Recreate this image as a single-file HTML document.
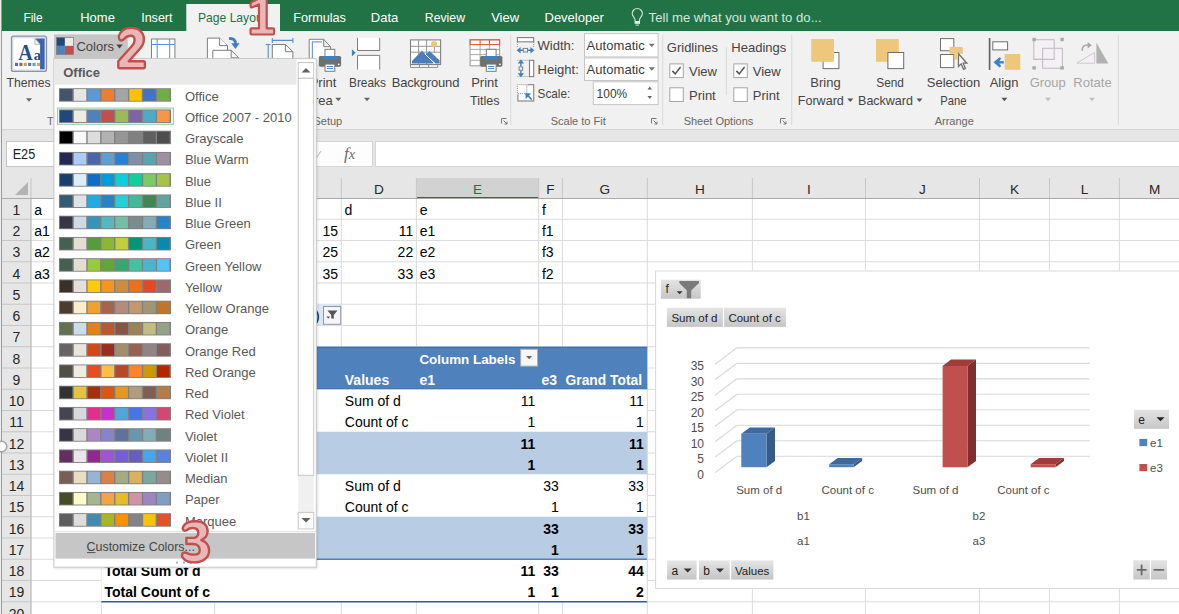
<!DOCTYPE html><html><head><meta charset="utf-8"><style>html,body{margin:0;padding:0;background:#fff;overflow:hidden;width:1179px;height:614px}svg{display:block;font-family:"Liberation Sans",sans-serif}</style></head><body>
<svg width="1179" height="614" viewBox="0 0 1179 614">
<rect x="0" y="0" width="1179" height="614" fill="#ffffff" />
<line x1="31" y1="219.25" x2="1179" y2="219.25" stroke="#dadcdd" stroke-width="1" />
<line x1="31" y1="240.5" x2="1179" y2="240.5" stroke="#dadcdd" stroke-width="1" />
<line x1="31" y1="261.75" x2="1179" y2="261.75" stroke="#dadcdd" stroke-width="1" />
<line x1="31" y1="283.0" x2="1179" y2="283.0" stroke="#dadcdd" stroke-width="1" />
<line x1="31" y1="304.25" x2="1179" y2="304.25" stroke="#dadcdd" stroke-width="1" />
<line x1="31" y1="325.5" x2="1179" y2="325.5" stroke="#dadcdd" stroke-width="1" />
<line x1="31" y1="346.75" x2="1179" y2="346.75" stroke="#dadcdd" stroke-width="1" />
<line x1="31" y1="368.0" x2="1179" y2="368.0" stroke="#dadcdd" stroke-width="1" />
<line x1="31" y1="389.25" x2="1179" y2="389.25" stroke="#dadcdd" stroke-width="1" />
<line x1="31" y1="410.5" x2="1179" y2="410.5" stroke="#dadcdd" stroke-width="1" />
<line x1="31" y1="431.75" x2="1179" y2="431.75" stroke="#dadcdd" stroke-width="1" />
<line x1="31" y1="453.0" x2="1179" y2="453.0" stroke="#dadcdd" stroke-width="1" />
<line x1="31" y1="474.25" x2="1179" y2="474.25" stroke="#dadcdd" stroke-width="1" />
<line x1="31" y1="495.5" x2="1179" y2="495.5" stroke="#dadcdd" stroke-width="1" />
<line x1="31" y1="516.75" x2="1179" y2="516.75" stroke="#dadcdd" stroke-width="1" />
<line x1="31" y1="538.0" x2="1179" y2="538.0" stroke="#dadcdd" stroke-width="1" />
<line x1="31" y1="559.25" x2="1179" y2="559.25" stroke="#dadcdd" stroke-width="1" />
<line x1="31" y1="580.5" x2="1179" y2="580.5" stroke="#dadcdd" stroke-width="1" />
<line x1="31" y1="601.75" x2="1179" y2="601.75" stroke="#dadcdd" stroke-width="1" />
<line x1="31" y1="623.0" x2="1179" y2="623.0" stroke="#dadcdd" stroke-width="1" />
<line x1="101.4" y1="198" x2="101.4" y2="614" stroke="#dadcdd" stroke-width="1" />
<line x1="214.7" y1="198" x2="214.7" y2="614" stroke="#dadcdd" stroke-width="1" />
<line x1="341.3" y1="198" x2="341.3" y2="614" stroke="#dadcdd" stroke-width="1" />
<line x1="416.4" y1="198" x2="416.4" y2="614" stroke="#dadcdd" stroke-width="1" />
<line x1="538.65" y1="198" x2="538.65" y2="614" stroke="#dadcdd" stroke-width="1" />
<line x1="562.4" y1="198" x2="562.4" y2="614" stroke="#dadcdd" stroke-width="1" />
<line x1="647.3" y1="198" x2="647.3" y2="614" stroke="#dadcdd" stroke-width="1" />
<line x1="752.4" y1="198" x2="752.4" y2="614" stroke="#dadcdd" stroke-width="1" />
<line x1="865.5" y1="198" x2="865.5" y2="614" stroke="#dadcdd" stroke-width="1" />
<line x1="979.5" y1="198" x2="979.5" y2="614" stroke="#dadcdd" stroke-width="1" />
<line x1="1049.5" y1="198" x2="1049.5" y2="614" stroke="#dadcdd" stroke-width="1" />
<line x1="1119.4" y1="198" x2="1119.4" y2="614" stroke="#dadcdd" stroke-width="1" />
<text x="34.3" y="214.75" font-size="14" fill="#000" text-anchor="start" font-weight="normal" >a</text>
<text x="34.3" y="236.0" font-size="14" fill="#000" text-anchor="start" font-weight="normal" >a1</text>
<text x="34.3" y="257.25" font-size="14" fill="#000" text-anchor="start" font-weight="normal" >a2</text>
<text x="34.3" y="278.5" font-size="14" fill="#000" text-anchor="start" font-weight="normal" >a3</text>
<text x="338.1" y="236.0" font-size="14" fill="#000" text-anchor="end" font-weight="normal" >15</text>
<text x="338.1" y="257.25" font-size="14" fill="#000" text-anchor="end" font-weight="normal" >25</text>
<text x="338.1" y="278.5" font-size="14" fill="#000" text-anchor="end" font-weight="normal" >35</text>
<text x="344.6" y="214.75" font-size="14" fill="#000" text-anchor="start" font-weight="normal" >d</text>
<text x="413.2" y="236.0" font-size="14" fill="#000" text-anchor="end" font-weight="normal" >11</text>
<text x="413.2" y="257.25" font-size="14" fill="#000" text-anchor="end" font-weight="normal" >22</text>
<text x="413.2" y="278.5" font-size="14" fill="#000" text-anchor="end" font-weight="normal" >33</text>
<text x="419.7" y="214.75" font-size="14" fill="#000" text-anchor="start" font-weight="normal" >e</text>
<text x="419.7" y="236.0" font-size="14" fill="#000" text-anchor="start" font-weight="normal" >e1</text>
<text x="419.7" y="257.25" font-size="14" fill="#000" text-anchor="start" font-weight="normal" >e2</text>
<text x="419.7" y="278.5" font-size="14" fill="#000" text-anchor="start" font-weight="normal" >e3</text>
<text x="541.9499999999999" y="214.75" font-size="14" fill="#000" text-anchor="start" font-weight="normal" >f</text>
<text x="541.9499999999999" y="236.0" font-size="14" fill="#000" text-anchor="start" font-weight="normal" >f1</text>
<text x="541.9499999999999" y="257.25" font-size="14" fill="#000" text-anchor="start" font-weight="normal" >f3</text>
<text x="541.9499999999999" y="278.5" font-size="14" fill="#000" text-anchor="start" font-weight="normal" >f2</text>
<rect x="316.5" y="304.25" width="24.80000000000001" height="21.25" fill="#dce6f1" />
<rect x="101.4" y="346.75" width="545.9" height="255.0" fill="#ffffff" />
<rect x="101.4" y="346.75" width="545.9" height="42.5" fill="#4f81bd" />
<rect x="101.4" y="431.75" width="545.9" height="42.5" fill="#b8cce4" />
<rect x="101.4" y="516.75" width="545.9" height="42.5" fill="#b8cce4" />
<line x1="101.4" y1="347.25" x2="647.3" y2="347.25" stroke="#3e6aa3" stroke-width="1" />
<line x1="101.4" y1="388.65" x2="647.3" y2="388.65" stroke="#4776b0" stroke-width="1" />
<line x1="101.4" y1="559.25" x2="647.3" y2="559.25" stroke="#4f81bd" stroke-width="1.5" />
<line x1="101.4" y1="601.75" x2="647.3" y2="601.75" stroke="#2f5d98" stroke-width="1.7" />
<line x1="647.3" y1="389.25" x2="647.3" y2="601.75" stroke="#dadcdd" stroke-width="1" />
<text x="419.4" y="363.5" font-size="13.4" fill="#ffffff" text-anchor="start" font-weight="bold" >Column Labels</text>
<text x="344.8" y="384.75" font-size="14" fill="#ffffff" text-anchor="start" font-weight="bold" >Values</text>
<text x="419.4" y="384.75" font-size="14" fill="#ffffff" text-anchor="start" font-weight="bold" >e1</text>
<text x="557" y="384.75" font-size="14" fill="#ffffff" text-anchor="end" font-weight="bold" >e3</text>
<text x="642" y="384.75" font-size="13.8" fill="#ffffff" text-anchor="end" font-weight="bold" >Grand Total</text>
<text x="344.8" y="406.0" font-size="14" fill="#000" text-anchor="start" font-weight="normal" >Sum of d</text>
<text x="344.8" y="427.25" font-size="14" fill="#000" text-anchor="start" font-weight="normal" >Count of c</text>
<text x="344.8" y="491.0" font-size="14" fill="#000" text-anchor="start" font-weight="normal" >Sum of d</text>
<text x="344.8" y="512.25" font-size="14" fill="#000" text-anchor="start" font-weight="normal" >Count of c</text>
<text x="535.4" y="406.0" font-size="14" fill="#000" text-anchor="end" font-weight="normal" >11</text>
<text x="643.8" y="406.0" font-size="14" fill="#000" text-anchor="end" font-weight="normal" >11</text>
<text x="535.4" y="427.25" font-size="14" fill="#000" text-anchor="end" font-weight="normal" >1</text>
<text x="643.8" y="427.25" font-size="14" fill="#000" text-anchor="end" font-weight="normal" >1</text>
<text x="535.4" y="448.5" font-size="14" fill="#000" text-anchor="end" font-weight="bold" >11</text>
<text x="643.8" y="448.5" font-size="14" fill="#000" text-anchor="end" font-weight="bold" >11</text>
<text x="535.4" y="469.75" font-size="14" fill="#000" text-anchor="end" font-weight="bold" >1</text>
<text x="643.8" y="469.75" font-size="14" fill="#000" text-anchor="end" font-weight="bold" >1</text>
<text x="558.8" y="491.0" font-size="14" fill="#000" text-anchor="end" font-weight="normal" >33</text>
<text x="643.8" y="491.0" font-size="14" fill="#000" text-anchor="end" font-weight="normal" >33</text>
<text x="558.8" y="512.25" font-size="14" fill="#000" text-anchor="end" font-weight="normal" >1</text>
<text x="643.8" y="512.25" font-size="14" fill="#000" text-anchor="end" font-weight="normal" >1</text>
<text x="558.8" y="533.5" font-size="14" fill="#000" text-anchor="end" font-weight="bold" >33</text>
<text x="643.8" y="533.5" font-size="14" fill="#000" text-anchor="end" font-weight="bold" >33</text>
<text x="558.8" y="554.75" font-size="14" fill="#000" text-anchor="end" font-weight="bold" >1</text>
<text x="643.8" y="554.75" font-size="14" fill="#000" text-anchor="end" font-weight="bold" >1</text>
<text x="104.5" y="576.0" font-size="14" fill="#000" text-anchor="start" font-weight="bold" >Total Sum of d</text>
<text x="104.5" y="597.25" font-size="14" fill="#000" text-anchor="start" font-weight="bold" >Total Count of c</text>
<text x="535.4" y="576.0" font-size="14" fill="#000" text-anchor="end" font-weight="bold" >11</text>
<text x="558.8" y="576.0" font-size="14" fill="#000" text-anchor="end" font-weight="bold" >33</text>
<text x="643.8" y="576.0" font-size="14" fill="#000" text-anchor="end" font-weight="bold" >44</text>
<text x="535.4" y="597.25" font-size="14" fill="#000" text-anchor="end" font-weight="bold" >1</text>
<text x="558.8" y="597.25" font-size="14" fill="#000" text-anchor="end" font-weight="bold" >1</text>
<text x="643.8" y="597.25" font-size="14" fill="#000" text-anchor="end" font-weight="bold" >2</text>
<rect x="0" y="129.5" width="1179" height="68.5" fill="#e6e6e6" />
<rect x="0" y="198" width="31" height="416" fill="#e6e6e6" />
<rect x="416.9" y="178" width="121.75" height="20" fill="#d2d2d2" />
<line x1="416.4" y1="197.7" x2="538.65" y2="197.7" stroke="#217346" stroke-width="1.6" />
<line x1="31" y1="178" x2="31" y2="198" stroke="#c6c6c6" stroke-width="1" />
<line x1="101.4" y1="178" x2="101.4" y2="198" stroke="#c6c6c6" stroke-width="1" />
<line x1="214.7" y1="178" x2="214.7" y2="198" stroke="#c6c6c6" stroke-width="1" />
<line x1="341.3" y1="178" x2="341.3" y2="198" stroke="#c6c6c6" stroke-width="1" />
<line x1="416.4" y1="178" x2="416.4" y2="198" stroke="#c6c6c6" stroke-width="1" />
<line x1="538.65" y1="178" x2="538.65" y2="198" stroke="#c6c6c6" stroke-width="1" />
<line x1="562.4" y1="178" x2="562.4" y2="198" stroke="#c6c6c6" stroke-width="1" />
<line x1="647.3" y1="178" x2="647.3" y2="198" stroke="#c6c6c6" stroke-width="1" />
<line x1="752.4" y1="178" x2="752.4" y2="198" stroke="#c6c6c6" stroke-width="1" />
<line x1="865.5" y1="178" x2="865.5" y2="198" stroke="#c6c6c6" stroke-width="1" />
<line x1="979.5" y1="178" x2="979.5" y2="198" stroke="#c6c6c6" stroke-width="1" />
<line x1="1049.5" y1="178" x2="1049.5" y2="198" stroke="#c6c6c6" stroke-width="1" />
<line x1="1119.4" y1="178" x2="1119.4" y2="198" stroke="#c6c6c6" stroke-width="1" />
<line x1="0" y1="198.5" x2="1179" y2="198.5" stroke="#ababab" stroke-width="1" />
<line x1="31" y1="198" x2="31" y2="614" stroke="#ababab" stroke-width="1" />
<line x1="0" y1="219.25" x2="31" y2="219.25" stroke="#c6c6c6" stroke-width="1" />
<line x1="0" y1="240.5" x2="31" y2="240.5" stroke="#c6c6c6" stroke-width="1" />
<line x1="0" y1="261.75" x2="31" y2="261.75" stroke="#c6c6c6" stroke-width="1" />
<line x1="0" y1="283.0" x2="31" y2="283.0" stroke="#c6c6c6" stroke-width="1" />
<line x1="0" y1="304.25" x2="31" y2="304.25" stroke="#c6c6c6" stroke-width="1" />
<line x1="0" y1="325.5" x2="31" y2="325.5" stroke="#c6c6c6" stroke-width="1" />
<line x1="0" y1="346.75" x2="31" y2="346.75" stroke="#c6c6c6" stroke-width="1" />
<line x1="0" y1="368.0" x2="31" y2="368.0" stroke="#c6c6c6" stroke-width="1" />
<line x1="0" y1="389.25" x2="31" y2="389.25" stroke="#c6c6c6" stroke-width="1" />
<line x1="0" y1="410.5" x2="31" y2="410.5" stroke="#c6c6c6" stroke-width="1" />
<line x1="0" y1="431.75" x2="31" y2="431.75" stroke="#c6c6c6" stroke-width="1" />
<line x1="0" y1="453.0" x2="31" y2="453.0" stroke="#c6c6c6" stroke-width="1" />
<line x1="0" y1="474.25" x2="31" y2="474.25" stroke="#c6c6c6" stroke-width="1" />
<line x1="0" y1="495.5" x2="31" y2="495.5" stroke="#c6c6c6" stroke-width="1" />
<line x1="0" y1="516.75" x2="31" y2="516.75" stroke="#c6c6c6" stroke-width="1" />
<line x1="0" y1="538.0" x2="31" y2="538.0" stroke="#c6c6c6" stroke-width="1" />
<line x1="0" y1="559.25" x2="31" y2="559.25" stroke="#c6c6c6" stroke-width="1" />
<line x1="0" y1="580.5" x2="31" y2="580.5" stroke="#c6c6c6" stroke-width="1" />
<line x1="0" y1="601.75" x2="31" y2="601.75" stroke="#c6c6c6" stroke-width="1" />
<line x1="0" y1="623.0" x2="31" y2="623.0" stroke="#c6c6c6" stroke-width="1" />
<path d="M15,195 L28,195 L28,182 Z" fill="#b4b4b4"/>
<text x="66.2" y="193.7" font-size="13.6" fill="#262626" text-anchor="middle" font-weight="normal" >A</text>
<text x="158.05" y="193.7" font-size="13.6" fill="#262626" text-anchor="middle" font-weight="normal" >B</text>
<text x="278.0" y="193.7" font-size="13.6" fill="#262626" text-anchor="middle" font-weight="normal" >C</text>
<text x="378.85" y="193.7" font-size="13.6" fill="#262626" text-anchor="middle" font-weight="normal" >D</text>
<text x="477.525" y="193.7" font-size="13.6" fill="#217346" text-anchor="middle" font-weight="normal" >E</text>
<text x="550.525" y="193.7" font-size="13.6" fill="#262626" text-anchor="middle" font-weight="normal" >F</text>
<text x="604.8499999999999" y="193.7" font-size="13.6" fill="#262626" text-anchor="middle" font-weight="normal" >G</text>
<text x="699.8499999999999" y="193.7" font-size="13.6" fill="#262626" text-anchor="middle" font-weight="normal" >H</text>
<text x="808.95" y="193.7" font-size="13.6" fill="#262626" text-anchor="middle" font-weight="normal" >I</text>
<text x="922.5" y="193.7" font-size="13.6" fill="#262626" text-anchor="middle" font-weight="normal" >J</text>
<text x="1014.5" y="193.7" font-size="13.6" fill="#262626" text-anchor="middle" font-weight="normal" >K</text>
<text x="1084.45" y="193.7" font-size="13.6" fill="#262626" text-anchor="middle" font-weight="normal" >L</text>
<text x="1154.7" y="193.7" font-size="13.6" fill="#262626" text-anchor="middle" font-weight="normal" >M</text>
<text x="16.5" y="214.75" font-size="14" fill="#262626" text-anchor="middle" font-weight="normal" >1</text>
<text x="16.5" y="236.0" font-size="14" fill="#262626" text-anchor="middle" font-weight="normal" >2</text>
<text x="16.5" y="257.25" font-size="14" fill="#262626" text-anchor="middle" font-weight="normal" >3</text>
<text x="16.5" y="278.5" font-size="14" fill="#262626" text-anchor="middle" font-weight="normal" >4</text>
<text x="16.5" y="299.75" font-size="14" fill="#262626" text-anchor="middle" font-weight="normal" >5</text>
<text x="16.5" y="321.0" font-size="14" fill="#262626" text-anchor="middle" font-weight="normal" >6</text>
<text x="16.5" y="342.25" font-size="14" fill="#262626" text-anchor="middle" font-weight="normal" >7</text>
<text x="16.5" y="363.5" font-size="14" fill="#262626" text-anchor="middle" font-weight="normal" >8</text>
<text x="16.5" y="384.75" font-size="14" fill="#262626" text-anchor="middle" font-weight="normal" >9</text>
<text x="16.5" y="406.0" font-size="14" fill="#262626" text-anchor="middle" font-weight="normal" >10</text>
<text x="16.5" y="427.25" font-size="14" fill="#262626" text-anchor="middle" font-weight="normal" >11</text>
<text x="16.5" y="448.5" font-size="14" fill="#262626" text-anchor="middle" font-weight="normal" >12</text>
<text x="16.5" y="469.75" font-size="14" fill="#262626" text-anchor="middle" font-weight="normal" >13</text>
<text x="16.5" y="491.0" font-size="14" fill="#262626" text-anchor="middle" font-weight="normal" >14</text>
<text x="16.5" y="512.25" font-size="14" fill="#262626" text-anchor="middle" font-weight="normal" >15</text>
<text x="16.5" y="533.5" font-size="14" fill="#262626" text-anchor="middle" font-weight="normal" >16</text>
<text x="16.5" y="554.75" font-size="14" fill="#262626" text-anchor="middle" font-weight="normal" >17</text>
<text x="16.5" y="576.0" font-size="14" fill="#262626" text-anchor="middle" font-weight="normal" >18</text>
<text x="16.5" y="597.25" font-size="14" fill="#262626" text-anchor="middle" font-weight="normal" >19</text>
<text x="16.5" y="618.5" font-size="14" fill="#262626" text-anchor="middle" font-weight="normal" >20</text>
<rect x="6.5" y="141.5" width="140" height="25" fill="#ffffff" stroke="#c6c6c6" stroke-width="1" />
<text x="12.7" y="159.2" font-size="14" fill="#222" text-anchor="start" font-weight="normal"  textLength="22.5" lengthAdjust="spacingAndGlyphs">E25</text>
<rect x="300" y="141.5" width="72.5" height="25" fill="#fdfdfd" stroke="#d4d4d4" stroke-width="1" />
<rect x="375.5" y="141.5" width="804" height="25" fill="#ffffff" stroke="#d4d4d4" stroke-width="1" />
<text x="344" y="158.8" font-family="Liberation Serif" font-style="italic" font-size="17" fill="#6a6a6a">f<tspan font-size="14" dx="0">x</tspan></text>
<path d="M315,155 l2,2 l4,-6" fill="none" stroke="#c8c8c8" stroke-width="1.3"/>
<rect x="0" y="0" width="2" height="614" fill="#eeeeee" />
<line x1="1.5" y1="0" x2="1.5" y2="614" stroke="#9a9a9a" stroke-width="1" />
<circle cx="1.5" cy="446.5" r="5.3" fill="#ffffff" stroke="#a6a6a6" stroke-width="1.6"/>
<rect x="2" y="0" width="1177" height="31" fill="#217346" />
<rect x="2" y="31" width="1177" height="98.5" fill="#f1f1f1" />
<line x1="2" y1="129.5" x2="1179" y2="129.5" stroke="#d5d5d5" stroke-width="1" />
<rect x="186.3" y="4" width="93.7" height="27" fill="#f1f1f1" />
<text x="23.4" y="22.4" font-size="13" fill="#ffffff" text-anchor="start" font-weight="normal"  textLength="19.3" lengthAdjust="spacingAndGlyphs">File</text>
<text x="80.2" y="22.4" font-size="13" fill="#ffffff" text-anchor="start" font-weight="normal" >Home</text>
<text x="141.2" y="22.4" font-size="13" fill="#ffffff" text-anchor="start" font-weight="normal"  textLength="31.3" lengthAdjust="spacingAndGlyphs">Insert</text>
<text x="293.2" y="22.4" font-size="13" fill="#ffffff" text-anchor="start" font-weight="normal"  textLength="52.7" lengthAdjust="spacingAndGlyphs">Formulas</text>
<text x="370.8" y="22.4" font-size="13" fill="#ffffff" text-anchor="start" font-weight="normal" >Data</text>
<text x="424.8" y="22.4" font-size="13" fill="#ffffff" text-anchor="start" font-weight="normal"  textLength="40.2" lengthAdjust="spacingAndGlyphs">Review</text>
<text x="491.2" y="22.4" font-size="13" fill="#ffffff" text-anchor="start" font-weight="normal" >View</text>
<text x="544.5" y="22.4" font-size="13" fill="#ffffff" text-anchor="start" font-weight="normal" >Developer</text>
<text x="198" y="22.4" font-size="13" fill="#217346" text-anchor="start" font-weight="normal"  textLength="68" lengthAdjust="spacingAndGlyphs">Page Layout</text>
<text x="648.6" y="22.4" font-size="13" fill="#d6e6dc" text-anchor="start" font-weight="normal"  textLength="173" lengthAdjust="spacingAndGlyphs">Tell me what you want to do...</text>
<g fill="none" stroke="#d4e4da" stroke-width="1.1"><path d="M635,21 L635,19.5 C635,17.8 632.2,16.5 632.2,13.6 A5.1,5.1 0 0 1 642.4,13.6 C642.4,16.5 639.6,17.8 639.6,19.5 L639.6,21"/></g>
<rect x="634.6" y="21" width="5.4" height="2.8" fill="#e8f0eb"/><rect x="635.6" y="24.6" width="3.4" height="1" fill="#d4e4da"/>
<line x1="510.7" y1="35" x2="510.7" y2="125" stroke="#dadada" stroke-width="1" />
<line x1="662.7" y1="35" x2="662.7" y2="125" stroke="#dadada" stroke-width="1" />
<line x1="791.7" y1="35" x2="791.7" y2="125" stroke="#dadada" stroke-width="1" />
<line x1="1118.4" y1="35" x2="1118.4" y2="125" stroke="#dadada" stroke-width="1" />
<rect x="11.5" y="36.2" width="35" height="35.2" rx="2" fill="#dfe5ee" stroke="#8a94a6" stroke-width="1.3"/>
<rect x="13.5" y="38.5" width="26.6" height="30.8" fill="#ffffff" />
<text x="18.3" y="59.7" font-family="Liberation Serif" font-weight="bold" font-size="23" fill="#1f4e8c" textLength="14.5" lengthAdjust="spacingAndGlyphs">A</text>
<text x="33.8" y="59.7" font-family="Liberation Serif" font-weight="bold" font-size="14.5" fill="#1f4e8c">a</text>
<path d="M35,38.5 L44.6,38.5 L44.6,69.3 L40.1,69.3 L40.1,44.3 Z" fill="#3b63b0"/>
<path d="M35,38.5 L35,44.3 L40.1,44.3 Z" fill="#ffffff" stroke="#9aa0a8" stroke-width="0.8"/>
<rect x="15.0" y="62.8" width="3.1" height="3.2" fill="#4472c4" />
<rect x="19.38" y="62.8" width="3.1" height="3.2" fill="#c0504d" />
<rect x="23.759999999999998" y="62.8" width="3.1" height="3.2" fill="#9bbb59" />
<rect x="28.14" y="62.8" width="3.1" height="3.2" fill="#8064a2" />
<rect x="32.519999999999996" y="62.8" width="3.1" height="3.2" fill="#4bacc6" />
<rect x="36.9" y="62.8" width="3.1" height="3.2" fill="#f79646" />
<text x="28.5" y="87.4" font-size="13" fill="#444444" text-anchor="middle" font-weight="normal"  textLength="44.1" lengthAdjust="spacingAndGlyphs">Themes</text>
<path d="M26.0,98.3 L32.0,98.3 L29,101.7 Z" fill="#666"/>
<text x="47" y="125" font-size="11" fill="#666666" text-anchor="start" font-weight="normal" >Themes</text>
<rect x="151.5" y="39" width="23.4" height="22" fill="#ffffff" stroke="#7f7f7f" stroke-width="1" />
<line x1="151.5" y1="44.5" x2="174.9" y2="44.5" stroke="#5b8fcf" stroke-width="1" />
<line x1="157.2" y1="39" x2="157.2" y2="61" stroke="#5b8fcf" stroke-width="1" />
<line x1="169.7" y1="39" x2="169.7" y2="61" stroke="#5b8fcf" stroke-width="1" />
<path d="M207.4,61 L207.4,38.1 L219.6,38.1 L227.5,45.6 L227.5,50.3" fill="#ffffff" stroke="#7f7f7f"/>
<path d="M219.6,38.1 L219.6,45.6 L227.5,45.6" fill="#ffffff" stroke="#7f7f7f"/>
<path d="M212.8,61 L212.8,50.3 L231.2,50.3 L238.6,57.8 L238.6,61 Z" fill="#ffffff" stroke="#7f7f7f"/>
<path d="M231.2,50.3 L231.2,57.8 L238.6,57.8" fill="none" stroke="#7f7f7f"/>
<path d="M229,38.6 Q235.8,38 235.4,44.2" fill="none" stroke="#3f7fc8" stroke-width="2.9"/>
<path d="M231.2,43.3 L239.6,43.3 L235.4,49 Z" fill="#3f7fc8"/>
<g stroke="#5b8fcf" stroke-width="1.1" fill="none"><path d="M272.3,40.4 L292.9,40.4 M272.3,38 L272.3,43 M292.9,38 L292.9,43"/><path d="M268.2,44.5 L268.2,62 M265.8,44.5 L270.6,44.5"/></g>
<path d="M272.3,62 L272.3,44.5 L285.4,44.5 L292.9,51.7 L292.9,62 Z" fill="#ffffff" stroke="#7f7f7f"/>
<path d="M285.4,44.5 L285.4,51.7 L292.9,51.7" fill="none" stroke="#7f7f7f"/>
<path d="M309.2,68.4 L309.2,39.3 L323.7,39.3 L330.5,46.7 L330.5,56 M323.7,39.3 L323.7,46.7 L330.5,46.7" fill="#ffffff" stroke="#808080"/>
<path d="M312.4,66 L312.4,41.9 L321.9,41.9" fill="none" stroke="#6fa0d8" stroke-width="1.2"/>
<rect x="325.0" y="49.3" width="9.8" height="7.5" fill="#ffffff" stroke="#7a7a7a"/>
<rect x="318.8" y="55.9" width="22.3" height="10.8" rx="1.6" fill="#6f6f6f"/>
<rect x="322.90000000000003" y="56.1" width="14" height="3.8" fill="#3f7fc8"/>
<rect x="325.0" y="64.1" width="9.8" height="7.2" fill="#ffffff" stroke="#7a7a7a"/>
<path d="M326.8,66.5 h6.2 M326.8,68.5 h6.2" stroke="#3f7fc8" stroke-width="0.9"/>
<circle cx="338.7" cy="64.3" r="0.9" fill="#ffffff"/>
<path d="M351.9,49.3 L351.9,56.4 L355.6,52.8 Z" fill="#3f7fc8"/>
<path d="M357.5,37.8 L357.5,50.5 L379.7,50.5 L379.7,37.8" fill="#ffffff" stroke="#7f7f7f"/>
<path d="M357.5,69.6 L357.5,55.4 L379.7,55.4 L379.7,69.6" fill="#ffffff" stroke="#7f7f7f"/>
<rect x="410.5" y="39.9" width="30.1" height="24.6" fill="#ffffff" stroke="#808080" stroke-width="1.1"/>
<g stroke="#8a8a8a" stroke-width="0.9" fill="none"><path d="M418.6,39.9 V64.5 M426.6,39.9 V64.5 M434.3,47 V52.2 M410.5,46.3 H440.6 M410.5,52.2 H440.6"/><path d="M410.5,64.5 V67.5 H437.7 V64.5 M419.5,64.5 V67.5 M428.7,64.5 V67.5"/></g>
<circle cx="434" cy="44" r="3" fill="#f0c870"/>
<path d="M412,63.5 L412,61 L421.9,50.8 L433.5,62 L433.5,63.5 Z" fill="#4a7ebb"/>
<path d="M425.5,54.5 L429.6,51 L439.6,60.5 L439.6,63.5 L435.5,63.5 Z" fill="#4a7ebb"/>
<path d="M425,54 L435,63.8" stroke="#ffffff" stroke-width="1"/>
<rect x="470.1" y="39.8" width="29.5" height="26" fill="#ffffff" stroke="#9a9a9a"/>
<g stroke="#a0a0a0" stroke-width="0.9"><path d="M470.1,49.4 H499.6 M470.1,54.6 H499.6 M470.1,60.3 H499.6 M480.1,44.6 V65.8 M489.4,44.6 V60"/></g>
<rect x="470.1" y="39.8" width="29.5" height="4.8" fill="none" stroke="#e05a3a" stroke-width="1.1"/>
<path d="M480.1,39.8 V44.6 M489.4,39.8 V44.6" stroke="#e05a3a" stroke-width="1.1"/>
<rect x="486.3" y="49.3" width="9.8" height="7.5" fill="#ffffff" stroke="#7a7a7a"/>
<rect x="480.1" y="55.9" width="22.3" height="10.8" rx="1.6" fill="#6f6f6f"/>
<rect x="484.20000000000005" y="56.1" width="14" height="3.8" fill="#3f7fc8"/>
<rect x="486.3" y="64.1" width="9.8" height="7.2" fill="#ffffff" stroke="#7a7a7a"/>
<path d="M488.1,66.5 h6.2 M488.1,68.5 h6.2" stroke="#3f7fc8" stroke-width="0.9"/>
<circle cx="500.0" cy="64.3" r="0.9" fill="#ffffff"/>
<text x="323" y="87.4" font-size="13" fill="#444444" text-anchor="middle" font-weight="normal" >Print</text>
<text x="319" y="104.8" font-size="13" fill="#444444" text-anchor="middle" font-weight="normal" >Area</text>
<path d="M335.3,97.8 L341.3,97.8 L338.3,101.2 Z" fill="#666"/>
<text x="349" y="87.4" font-size="13" fill="#444444" text-anchor="start" font-weight="normal"  textLength="36.9" lengthAdjust="spacingAndGlyphs">Breaks</text>
<path d="M364.0,97.8 L370.0,97.8 L367,101.2 Z" fill="#666"/>
<text x="391.7" y="87.4" font-size="13" fill="#444444" text-anchor="start" font-weight="normal" textLength="67.7">Background</text>
<text x="484.5" y="87.4" font-size="13" fill="#444444" text-anchor="middle" font-weight="normal" >Print</text>
<text x="484.7" y="104.8" font-size="13" fill="#444444" text-anchor="middle" font-weight="normal"  textLength="29.5" lengthAdjust="spacingAndGlyphs">Titles</text>
<text x="342.2" y="124.9" font-size="11" fill="#666666" text-anchor="end" font-weight="normal" >Page Setup</text>
<g fill="none" stroke="#777" stroke-width="1"><path d="M501.5,123.5 L501.5,118.5 L506.5,118.5"/><path d="M503.5,120.5 L507,124 M504.5,124 L507,124 L507,121.5"/></g>
<rect x="517.4" y="37.6" width="16.3" height="4.2" fill="#ffffff" stroke="#808080" stroke-width="1.1"/>
<path d="M517.4,42 V48 M533.7,42 V48" stroke="#8a8a8a" stroke-width="0.9" stroke-dasharray="1,1"/>
<g fill="#3f7fc8"><path d="M516.6,50.2 L520.6,47 L520.6,53.4 Z M534.4,50.2 L530.4,47 L530.4,53.4 Z"/></g>
<path d="M519.5,50.2 H523 M528,50.2 H531.5" stroke="#3f7fc8" stroke-width="1.4"/>
<rect x="523.3" y="48.4" width="4.2" height="3.6" fill="#f0f0f0" stroke="#808080" stroke-width="1" />
<rect x="529.5" y="60.3" width="4.2" height="16.3" fill="#ffffff" stroke="#808080" stroke-width="1.1"/>
<path d="M517.5,60.3 H529 M517.5,76.6 H529" stroke="#8a8a8a" stroke-width="0.9" stroke-dasharray="1,1"/>
<g fill="#3f7fc8"><path d="M520.9,59.6 L517.7,63.6 L524.1,63.6 Z M520.9,77.3 L517.7,73.3 L524.1,73.3 Z"/></g>
<path d="M520.9,62.5 V66.5 M520.9,70.5 V74.5" stroke="#3f7fc8" stroke-width="1.4"/>
<rect x="519.1" y="66.9" width="3.6" height="3.4" fill="#f0f0f0" stroke="#808080" stroke-width="1" />
<rect x="517.9" y="84.7" width="15.8" height="16.3" fill="#ffffff" stroke="#808080" stroke-width="1.1"/>
<rect x="516.6" y="83.9" width="10.9" height="10.5" fill="#f1f1f1" />
<rect x="517.4" y="84.7" width="9.3" height="8.9" fill="#ffffff" stroke="#8a8a8a" stroke-width="0.9" stroke-dasharray="1,1"/>
<path d="M531.8,99.6 L527.5,95.3" stroke="#3f7fc8" stroke-width="1.6"/><path d="M525.3,93.1 L531.2,93.6 L525.8,99 Z" fill="#3f7fc8"/>
<text x="537.6" y="50.4" font-size="13" fill="#444444" text-anchor="start" font-weight="normal" >Width:</text>
<text x="537.6" y="74" font-size="13" fill="#444444" text-anchor="start" font-weight="normal" >Height:</text>
<text x="537.6" y="97.6" font-size="13" fill="#444444" text-anchor="start" font-weight="normal"  textLength="32.6" lengthAdjust="spacingAndGlyphs">Scale:</text>
<rect x="584.5" y="33.6" width="73.6" height="23.3" fill="#ffffff" stroke="#c6c6c6" stroke-width="1" />
<rect x="584.5" y="57.9" width="73.6" height="22.6" fill="#ffffff" stroke="#c6c6c6" stroke-width="1" />
<rect x="593.3" y="81.8" width="64.8" height="22.8" fill="#ffffff" stroke="#c6c6c6" stroke-width="1" />
<text x="586.5" y="50.4" font-size="13" fill="#3a3a3a" text-anchor="start" font-weight="normal" textLength="58.3">Automatic</text>
<text x="586.5" y="74" font-size="13" fill="#3a3a3a" text-anchor="start" font-weight="normal" textLength="58.3">Automatic</text>
<path d="M648.8,43.65 L654.8,43.65 L651.8,46.949999999999996 Z" fill="#707070"/>
<path d="M648.8,67.35 L654.8,67.35 L651.8,70.65 Z" fill="#707070"/>
<text x="596.6" y="97.6" font-size="13" fill="#3a3a3a" text-anchor="start" font-weight="normal"  textLength="30.6" lengthAdjust="spacingAndGlyphs">100%</text>
<path d="M647.5,89.5 L652,89.5 L649.75,86.5 Z M647.5,96 L652,96 L649.75,99 Z" fill="#666"/>
<text x="578.2" y="124.9" font-size="11" fill="#666666" text-anchor="middle" font-weight="normal" >Scale to Fit</text>
<g fill="none" stroke="#777" stroke-width="1"><path d="M651.5,123.5 L651.5,118.5 L656.5,118.5"/><path d="M653.5,120.5 L657,124 M654.5,124 L657,124 L657,121.5"/></g>
<text x="666.8" y="52" font-size="13" fill="#444444" text-anchor="start" font-weight="normal" >Gridlines</text>
<text x="731.3" y="52" font-size="13" fill="#444444" text-anchor="start" font-weight="normal" >Headings</text>
<line x1="726.4" y1="47" x2="726.4" y2="95" stroke="#dadada" stroke-width="1" />
<rect x="669.8" y="63.9" width="13.5" height="13.7" fill="#ffffff" stroke="#a6a6a6" stroke-width="1" />
<path d="M672.4,70.9 L675.1999999999999,73.9 L680.5999999999999,67.1" fill="none" stroke="#555555" stroke-width="1.6"/>
<rect x="669.8" y="87.8" width="13.5" height="13.7" fill="#ffffff" stroke="#a6a6a6" stroke-width="1" />
<rect x="733.8" y="63.9" width="13.5" height="13.7" fill="#ffffff" stroke="#a6a6a6" stroke-width="1" />
<path d="M736.4,70.9 L739.1999999999999,73.9 L744.5999999999999,67.1" fill="none" stroke="#555555" stroke-width="1.6"/>
<rect x="733.8" y="87.8" width="13.5" height="13.7" fill="#ffffff" stroke="#a6a6a6" stroke-width="1" />
<text x="689" y="75.6" font-size="13" fill="#444444" text-anchor="start" font-weight="normal" >View</text>
<text x="689" y="99.7" font-size="13" fill="#444444" text-anchor="start" font-weight="normal" >Print</text>
<text x="752.8" y="75.6" font-size="13" fill="#444444" text-anchor="start" font-weight="normal" >View</text>
<text x="752.8" y="99.7" font-size="13" fill="#444444" text-anchor="start" font-weight="normal" >Print</text>
<text x="718.5" y="124.9" font-size="11" fill="#666666" text-anchor="middle" font-weight="normal" >Sheet Options</text>
<g fill="none" stroke="#777" stroke-width="1"><path d="M780.5,123.5 L780.5,118.5 L785.5,118.5"/><path d="M782.5,120.5 L786,124 M783.5,124 L786,124 L786,121.5"/></g>
<rect x="823.1" y="52.5" width="15.8" height="16.1" fill="#ffffff" stroke="#6e6e6e" stroke-width="1" />
<rect x="811.2" y="39" width="22.8" height="22.8" fill="#eec77c" />
<rect x="876" y="39" width="22.8" height="22.8" fill="#eec77c" />
<rect x="887.9" y="52.5" width="15.8" height="16.1" fill="#ffffff" stroke="#6e6e6e" stroke-width="1" />
<text x="825.5" y="87.3" font-size="13" fill="#444444" text-anchor="middle" font-weight="normal" >Bring</text>
<text x="820.8" y="105" font-size="13" fill="#444444" text-anchor="middle" font-weight="normal"  textLength="46" lengthAdjust="spacingAndGlyphs">Forward</text>
<path d="M847.3,98.55 L853.3,98.55 L850.3,102.05 Z" fill="#555"/>
<text x="890.1" y="87.3" font-size="13" fill="#444444" text-anchor="middle" font-weight="normal"  textLength="27.7" lengthAdjust="spacingAndGlyphs">Send</text>
<text x="885.5" y="105" font-size="13" fill="#444444" text-anchor="middle" font-weight="normal"  textLength="54.9" lengthAdjust="spacingAndGlyphs">Backward</text>
<path d="M916.5,98.55 L922.5,98.55 L919.5,102.05 Z" fill="#555"/>
<rect x="940.5" y="38.6" width="13.3" height="12.1" fill="#ffffff" stroke="#707070" stroke-width="1" />
<rect x="940.5" y="54.5" width="13.3" height="13.1" fill="#ffffff" stroke="#707070" stroke-width="1" />
<rect x="949.6" y="47" width="13.1" height="6.7" fill="#eec77c" />
<rect x="954.6" y="53.5" width="2.6" height="6.1" fill="#eec77c" />
<path d="M958.5,53.8 L958.5,66.5 L961.2,63.9 L963.6,69.3 L965.4,68.5 L963.1,63.2 L966.8,63.2 Z" fill="#ffffff" stroke="#707070" stroke-width="1.3"/>
<text x="953.5" y="87.3" font-size="13" fill="#444444" text-anchor="middle" font-weight="normal" >Selection</text>
<text x="953.4" y="105" font-size="13" fill="#444444" text-anchor="middle" font-weight="normal"  textLength="26.2" lengthAdjust="spacingAndGlyphs">Pane</text>
<line x1="989.6" y1="38" x2="989.6" y2="70" stroke="#606060" stroke-width="1.6" />
<rect x="992.8" y="41.8" width="14.8" height="8.1" fill="#ffffff" stroke="#707070" stroke-width="1" />
<rect x="1004.7" y="54" width="15.6" height="15.8" fill="#eec77c" />
<path d="M1003.8,62.3 H996.5" fill="none" stroke="#3f7fc8" stroke-width="2.4"/><path d="M999.5,57.2 L1001.2,58.4 L998.6,62.3 L1001.2,66.2 L999.5,67.4 L993.5,62.3 Z" fill="#3f7fc8"/>
<text x="1004.1" y="87.3" font-size="13" fill="#444444" text-anchor="middle" font-weight="normal" >Align</text>
<path d="M1001.4,97.75 L1007.4,97.75 L1004.4,101.25 Z" fill="#555"/>
<g fill="#f5f0f5" stroke="#c2bec2" stroke-width="1.1"><rect x="1033.8" y="39.7" width="20.4" height="19.7"/><rect x="1042.6" y="48.3" width="19.8" height="19.9"/></g>
<path d="M1033.8,59.4 H1054.2 V48.3" fill="none" stroke="#c2bec2" stroke-width="1.1"/>
<rect x="1032.4" y="37.8" width="3.4" height="3.4" fill="#a8a8a8" />
<rect x="1060.4" y="37.8" width="3.4" height="3.4" fill="#a8a8a8" />
<rect x="1032.4" y="66.2" width="3.4" height="3.4" fill="#a8a8a8" />
<rect x="1060.4" y="66.2" width="3.4" height="3.4" fill="#a8a8a8" />
<text x="1047.7" y="87.3" font-size="13" fill="#a6a6a6" text-anchor="middle" font-weight="normal" >Group</text>
<path d="M1045.0,97.75 L1051.0,97.75 L1048,101.25 Z" fill="#c0c0c0"/>
<path d="M1096.4,42.8 L1108.4,63.6 L1096.4,63.6 Z" fill="#b3b1b3"/>
<path d="M1076.8,63.2 L1094.6,52.4 L1094.6,63.2 Z" fill="#f5f0f5" stroke="#cfc9cf" stroke-width="1"/>
<path d="M1082.3,50.8 Q1081.5,44.8 1088.5,45" fill="none" stroke="#a8a8a8" stroke-width="1.5"/><path d="M1087.6,42 L1091.8,45.3 L1087.6,48.6 Z" fill="#a8a8a8"/>
<text x="1092.5" y="87.3" font-size="13" fill="#a6a6a6" text-anchor="middle" font-weight="normal" >Rotate</text>
<path d="M1089.0,97.75 L1095.0,97.75 L1092,101.25 Z" fill="#c0c0c0"/>
<text x="954.2" y="124.8" font-size="11" fill="#666666" text-anchor="middle" font-weight="normal" >Arrange</text>
<defs><linearGradient id="btn" x1="0" y1="0" x2="0" y2="1"><stop offset="0" stop-color="#e4e4e4"/><stop offset="1" stop-color="#c6c6c6"/></linearGradient><filter id="sh" x="-5%" y="-5%" width="115%" height="115%"><feGaussianBlur in="SourceAlpha" stdDeviation="1"/><feOffset dx="0.8" dy="1.2"/><feComponentTransfer><feFuncA type="linear" slope="0.12"/></feComponentTransfer><feMerge><feMergeNode/><feMergeNode in="SourceGraphic"/></feMerge></filter></defs>
<rect x="655.6" y="271" width="600" height="317.5" fill="#ffffff" stroke="#d9d9d9" stroke-width="1" />
<rect x="660.9" y="279.7" width="39.80000000000007" height="19.0" fill="url(#btn)"/>
<text x="665.5" y="293" font-size="12" fill="#222222" text-anchor="start" font-weight="normal" >f</text>
<path d="M676.6,291.2 L682.6,291.2 L679.6,294.2 Z" fill="#333"/>
<path d="M679.3,280.9 L699,280.9 L699,283 L691.2,290.6 L691.2,298.3 L686.8,298.3 L686.8,290.6 L679.3,283 Z" fill="#7a7a7a"/>
<rect x="666.9" y="307.8" width="56.0" height="19.099999999999966" fill="url(#btn)"/>
<rect x="724.1" y="307.8" width="61.799999999999955" height="19.099999999999966" fill="url(#btn)"/>
<text x="671.4" y="321.7" font-size="11.5" fill="#222222" text-anchor="start" font-weight="normal" >Sum of d</text>
<text x="728.4" y="321.7" font-size="11.5" fill="#222222" text-anchor="start" font-weight="normal" >Count of c</text>
<line x1="737" y1="347.8" x2="1089.7" y2="347.8" stroke="#d9d9d9" stroke-width="1.2" />
<line x1="737" y1="347.8" x2="715" y2="364.2" stroke="#d9d9d9" stroke-width="1.2" />
<line x1="737" y1="363.29" x2="1089.7" y2="363.29" stroke="#d9d9d9" stroke-width="1.2" />
<line x1="737" y1="363.29" x2="715" y2="379.69" stroke="#d9d9d9" stroke-width="1.2" />
<line x1="737" y1="378.78000000000003" x2="1089.7" y2="378.78000000000003" stroke="#d9d9d9" stroke-width="1.2" />
<line x1="737" y1="378.78000000000003" x2="715" y2="395.18" stroke="#d9d9d9" stroke-width="1.2" />
<line x1="737" y1="394.27" x2="1089.7" y2="394.27" stroke="#d9d9d9" stroke-width="1.2" />
<line x1="737" y1="394.27" x2="715" y2="410.66999999999996" stroke="#d9d9d9" stroke-width="1.2" />
<line x1="737" y1="409.76" x2="1089.7" y2="409.76" stroke="#d9d9d9" stroke-width="1.2" />
<line x1="737" y1="409.76" x2="715" y2="426.15999999999997" stroke="#d9d9d9" stroke-width="1.2" />
<line x1="737" y1="425.25" x2="1089.7" y2="425.25" stroke="#d9d9d9" stroke-width="1.2" />
<line x1="737" y1="425.25" x2="715" y2="441.65" stroke="#d9d9d9" stroke-width="1.2" />
<line x1="737" y1="440.74" x2="1089.7" y2="440.74" stroke="#d9d9d9" stroke-width="1.2" />
<line x1="737" y1="440.74" x2="715" y2="457.14" stroke="#d9d9d9" stroke-width="1.2" />
<line x1="737" y1="456.23" x2="1089.7" y2="456.23" stroke="#d9d9d9" stroke-width="1.2" />
<line x1="737" y1="456.23" x2="715" y2="472.63" stroke="#d9d9d9" stroke-width="1.2" />
<text x="704" y="370.4" font-size="12" fill="#4d4d4d" text-anchor="end" font-weight="normal" >35</text>
<text x="704" y="385.89" font-size="12" fill="#4d4d4d" text-anchor="end" font-weight="normal" >30</text>
<text x="704" y="401.38" font-size="12" fill="#4d4d4d" text-anchor="end" font-weight="normal" >25</text>
<text x="704" y="416.86999999999995" font-size="12" fill="#4d4d4d" text-anchor="end" font-weight="normal" >20</text>
<text x="704" y="432.35999999999996" font-size="12" fill="#4d4d4d" text-anchor="end" font-weight="normal" >15</text>
<text x="704" y="447.84999999999997" font-size="12" fill="#4d4d4d" text-anchor="end" font-weight="normal" >10</text>
<text x="704" y="463.34" font-size="12" fill="#4d4d4d" text-anchor="end" font-weight="normal" >5</text>
<text x="704" y="478.83" font-size="12" fill="#4d4d4d" text-anchor="end" font-weight="normal" >0</text>
<path d="M741.3,433.8 L749.8,427.5 L775.0,427.5 L766.5,433.8 Z" fill="#3d68a0"/>
<path d="M766.5,433.8 L775.0,427.5 L775.0,460.9 L766.5,467.2 Z" fill="#365b8a"/>
<rect x="741.3" y="433.8" width="25.200000000000045" height="33.39999999999998" fill="#4f81bd"/>
<path d="M829.2,464.2 L837.7,457.9 L862.1,457.9 L853.6,464.2 Z" fill="#3d68a0"/>
<path d="M853.6,464.2 L862.1,457.9 L862.1,460.9 L853.6,467.2 Z" fill="#365b8a"/>
<rect x="829.2" y="464.2" width="24.399999999999977" height="3.0" fill="#4f81bd"/>
<path d="M942.6,365.9 L951.1,359.59999999999997 L976.0,359.59999999999997 L967.5,365.9 Z" fill="#a03c3a"/>
<path d="M967.5,365.9 L976.0,359.59999999999997 L976.0,461.0 L967.5,467.3 Z" fill="#7f302e"/>
<rect x="942.6" y="365.9" width="24.899999999999977" height="101.40000000000003" fill="#c0504d"/>
<path d="M1030.6,464.2 L1039.1,457.9 L1064.0,457.9 L1055.5,464.2 Z" fill="#a03c3a"/>
<path d="M1055.5,464.2 L1064.0,457.9 L1064.0,461.0 L1055.5,467.3 Z" fill="#7f302e"/>
<rect x="1030.6" y="464.2" width="24.90000000000009" height="3.1000000000000227" fill="#c0504d"/>
<text x="759.2" y="494" font-size="11.5" fill="#4d4d4d" text-anchor="middle" font-weight="normal" >Sum of d</text>
<text x="847.7" y="494" font-size="11.5" fill="#4d4d4d" text-anchor="middle" font-weight="normal" >Count of c</text>
<text x="935.5" y="494" font-size="11.5" fill="#4d4d4d" text-anchor="middle" font-weight="normal" >Sum of d</text>
<text x="1023.4" y="494" font-size="11.5" fill="#4d4d4d" text-anchor="middle" font-weight="normal" >Count of c</text>
<text x="803.5" y="519.6" font-size="11.5" fill="#4d4d4d" text-anchor="middle" font-weight="normal" >b1</text>
<text x="979" y="519.6" font-size="11.5" fill="#4d4d4d" text-anchor="middle" font-weight="normal" >b2</text>
<text x="803.5" y="545" font-size="11.5" fill="#4d4d4d" text-anchor="middle" font-weight="normal" >a1</text>
<text x="979" y="545" font-size="11.5" fill="#4d4d4d" text-anchor="middle" font-weight="normal" >a3</text>
<rect x="1133.9" y="409.8" width="35.19999999999982" height="19.0" fill="url(#btn)"/>
<text x="1138.3" y="424" font-size="12" fill="#222222" text-anchor="start" font-weight="normal" >e</text>
<path d="M1156.5,417.2 L1164.5,417.2 L1160.5,421.2 Z" fill="#222"/>
<rect x="1139.4" y="438.9" width="7.8" height="7.2" fill="#4f81bd" />
<rect x="1139.4" y="464" width="7.8" height="7.2" fill="#c0504d" />
<text x="1150" y="446.5" font-size="11.5" fill="#4d4d4d" text-anchor="start" font-weight="normal" >e1</text>
<text x="1150" y="471.5" font-size="11.5" fill="#4d4d4d" text-anchor="start" font-weight="normal" >e3</text>
<rect x="1133.3" y="560.2" width="16.5" height="19.299999999999955" fill="url(#btn)"/>
<rect x="1151" y="560.2" width="16" height="19.299999999999955" fill="url(#btn)"/>
<path d="M1136.8,569.9 H1146.5 M1141.6,564.5 V575.3 M1153.5,569.9 H1164.2" stroke="#6a6a6a" stroke-width="1.8"/>
<rect x="667.1" y="560.4" width="29.5" height="19.200000000000045" fill="url(#btn)"/>
<rect x="699" y="560.4" width="30.700000000000045" height="19.200000000000045" fill="url(#btn)"/>
<rect x="731.2" y="560.4" width="42.19999999999993" height="19.200000000000045" fill="url(#btn)"/>
<text x="671.6" y="575" font-size="12" fill="#222222" text-anchor="start" font-weight="normal" >a</text>
<path d="M683.7,568.4 L691.7,568.4 L687.7,572.4 Z" fill="#333"/>
<text x="703.3" y="575" font-size="12" fill="#222222" text-anchor="start" font-weight="normal" >b</text>
<path d="M716.0,568.4 L724.0,568.4 L720,572.4 Z" fill="#333"/>
<text x="735" y="575" font-size="11.5" fill="#222222" text-anchor="start" font-weight="normal" >Values</text>
<rect x="323.5" y="306.5" width="17.2" height="17.8" fill="#f4f6f9" stroke="#8e9aa6" stroke-width="1"/>
<path d="M327.5,310.5 L337.5,310.5 L333.8,315 L333.8,318.6 L331.2,318.6 L331.2,315 Z" fill="#555"/>
<path d="M326.5,316.5 L330,316.5 L328.25,318.8 Z" fill="#555"/>
<text x="317.4" y="321.0" font-size="14" fill="#000" text-anchor="middle" font-weight="normal" >)</text>
<rect x="520.7" y="349.3" width="16.8" height="16.8" fill="#f7f7f7" stroke="#b0b0b0"/>
<path d="M526.1,355.90000000000003 L532.1,355.90000000000003 L529.1,359.3 Z" fill="#666"/>
<g filter="url(#sh)">
<rect x="53.9" y="58.6" width="262.4" height="508.6" fill="#ffffff" stroke="#c6c6c6" stroke-width="1" />
</g>
<rect x="54.1" y="34.4" width="73.7" height="24.3" fill="#c5c5c5" />
<rect x="56.4" y="37.4" width="8.5" height="8.5" fill="#1f497d" />
<rect x="64.9" y="37.4" width="8.6" height="8.5" fill="#eeece1" />
<rect x="56.4" y="45.9" width="8.5" height="8.5" fill="#4f81bd" />
<rect x="64.9" y="45.9" width="8.6" height="8.5" fill="#c0504d" />
<rect x="56.4" y="37.4" width="17.1" height="17" fill="none" stroke="#808080" stroke-width="0.8" />
<text x="76.4" y="50.9" font-size="13" fill="#444444" text-anchor="start" font-weight="normal" >Colors</text>
<path d="M116.25,44.6 L122.75,44.6 L119.5,48.4 Z" fill="#444"/>
<rect x="54.4" y="59.1" width="242" height="25.6" fill="#e9e9e9" />
<text x="63.2" y="76.6" font-size="13" fill="#5a5a5a" text-anchor="start" font-weight="bold" >Office</text>
<clipPath id="ddclip"><rect x="54.5" y="84.7" width="243" height="446"/></clipPath><g clip-path="url(#ddclip)">
<rect x="59" y="88.2" width="112" height="13.5" fill="#808080" />
<rect x="59.9" y="89.10000000000001" width="12.5" height="11.7" fill="#44546A" />
<rect x="73.78" y="89.10000000000001" width="12.5" height="11.7" fill="#E7E6E6" />
<rect x="87.66" y="89.10000000000001" width="12.5" height="11.7" fill="#5B9BD5" />
<rect x="101.53999999999999" y="89.10000000000001" width="12.5" height="11.7" fill="#ED7D31" />
<rect x="115.42" y="89.10000000000001" width="12.5" height="11.7" fill="#A5A5A5" />
<rect x="129.3" y="89.10000000000001" width="12.5" height="11.7" fill="#FFC000" />
<rect x="143.18" y="89.10000000000001" width="12.5" height="11.7" fill="#4472C4" />
<rect x="157.06" y="89.10000000000001" width="12.5" height="11.7" fill="#70AD47" />
<text x="184.9" y="100.7" font-size="13" fill="#595959" text-anchor="start" font-weight="normal" >Office</text>
<rect x="57.5" y="108.05" width="116" height="16.3" fill="#eaf5ee" stroke="#9fd0b0" stroke-width="1.1"/>
<rect x="59" y="109.45" width="112" height="13.5" fill="#808080" />
<rect x="59.9" y="110.35000000000001" width="12.5" height="11.7" fill="#1F497D" />
<rect x="73.78" y="110.35000000000001" width="12.5" height="11.7" fill="#EEECE1" />
<rect x="87.66" y="110.35000000000001" width="12.5" height="11.7" fill="#4F81BD" />
<rect x="101.53999999999999" y="110.35000000000001" width="12.5" height="11.7" fill="#C0504D" />
<rect x="115.42" y="110.35000000000001" width="12.5" height="11.7" fill="#9BBB59" />
<rect x="129.3" y="110.35000000000001" width="12.5" height="11.7" fill="#8064A2" />
<rect x="143.18" y="110.35000000000001" width="12.5" height="11.7" fill="#4BACC6" />
<rect x="157.06" y="110.35000000000001" width="12.5" height="11.7" fill="#F79646" />
<text x="184.9" y="121.95" font-size="13" fill="#595959" text-anchor="start" font-weight="normal" >Office 2007 - 2010</text>
<rect x="59" y="130.7" width="112" height="13.5" fill="#808080" />
<rect x="59.9" y="131.6" width="12.5" height="11.7" fill="#000000" />
<rect x="73.78" y="131.6" width="12.5" height="11.7" fill="#F8F8F8" />
<rect x="87.66" y="131.6" width="12.5" height="11.7" fill="#DDDDDD" />
<rect x="101.53999999999999" y="131.6" width="12.5" height="11.7" fill="#B2B2B2" />
<rect x="115.42" y="131.6" width="12.5" height="11.7" fill="#969696" />
<rect x="129.3" y="131.6" width="12.5" height="11.7" fill="#808080" />
<rect x="143.18" y="131.6" width="12.5" height="11.7" fill="#5F5F5F" />
<rect x="157.06" y="131.6" width="12.5" height="11.7" fill="#4D4D4D" />
<text x="184.9" y="143.2" font-size="13" fill="#595959" text-anchor="start" font-weight="normal" >Grayscale</text>
<rect x="59" y="151.95" width="112" height="13.5" fill="#808080" />
<rect x="59.9" y="152.85" width="12.5" height="11.7" fill="#242852" />
<rect x="73.78" y="152.85" width="12.5" height="11.7" fill="#ACCBF9" />
<rect x="87.66" y="152.85" width="12.5" height="11.7" fill="#4A66AC" />
<rect x="101.53999999999999" y="152.85" width="12.5" height="11.7" fill="#629DD1" />
<rect x="115.42" y="152.85" width="12.5" height="11.7" fill="#297FD5" />
<rect x="129.3" y="152.85" width="12.5" height="11.7" fill="#7F8FA9" />
<rect x="143.18" y="152.85" width="12.5" height="11.7" fill="#5AA2AE" />
<rect x="157.06" y="152.85" width="12.5" height="11.7" fill="#9D90A0" />
<text x="184.9" y="164.45" font-size="13" fill="#595959" text-anchor="start" font-weight="normal" >Blue Warm</text>
<rect x="59" y="173.2" width="112" height="13.5" fill="#808080" />
<rect x="59.9" y="174.1" width="12.5" height="11.7" fill="#17406D" />
<rect x="73.78" y="174.1" width="12.5" height="11.7" fill="#DBEFF9" />
<rect x="87.66" y="174.1" width="12.5" height="11.7" fill="#0F6FC6" />
<rect x="101.53999999999999" y="174.1" width="12.5" height="11.7" fill="#009DD9" />
<rect x="115.42" y="174.1" width="12.5" height="11.7" fill="#0BD0D9" />
<rect x="129.3" y="174.1" width="12.5" height="11.7" fill="#10CF9B" />
<rect x="143.18" y="174.1" width="12.5" height="11.7" fill="#7CCA62" />
<rect x="157.06" y="174.1" width="12.5" height="11.7" fill="#A5C249" />
<text x="184.9" y="185.7" font-size="13" fill="#595959" text-anchor="start" font-weight="normal" >Blue</text>
<rect x="59" y="194.45" width="112" height="13.5" fill="#808080" />
<rect x="59.9" y="195.35" width="12.5" height="11.7" fill="#335B74" />
<rect x="73.78" y="195.35" width="12.5" height="11.7" fill="#DFE3E5" />
<rect x="87.66" y="195.35" width="12.5" height="11.7" fill="#1CADE4" />
<rect x="101.53999999999999" y="195.35" width="12.5" height="11.7" fill="#2683C6" />
<rect x="115.42" y="195.35" width="12.5" height="11.7" fill="#27CED7" />
<rect x="129.3" y="195.35" width="12.5" height="11.7" fill="#42BA97" />
<rect x="143.18" y="195.35" width="12.5" height="11.7" fill="#3E8853" />
<rect x="157.06" y="195.35" width="12.5" height="11.7" fill="#62A39F" />
<text x="184.9" y="206.95" font-size="13" fill="#595959" text-anchor="start" font-weight="normal" >Blue II</text>
<rect x="59" y="215.7" width="112" height="13.5" fill="#808080" />
<rect x="59.9" y="216.6" width="12.5" height="11.7" fill="#373545" />
<rect x="73.78" y="216.6" width="12.5" height="11.7" fill="#CEDBE6" />
<rect x="87.66" y="216.6" width="12.5" height="11.7" fill="#3494BA" />
<rect x="101.53999999999999" y="216.6" width="12.5" height="11.7" fill="#58B6C0" />
<rect x="115.42" y="216.6" width="12.5" height="11.7" fill="#75BDA7" />
<rect x="129.3" y="216.6" width="12.5" height="11.7" fill="#7A8C8E" />
<rect x="143.18" y="216.6" width="12.5" height="11.7" fill="#84ACB6" />
<rect x="157.06" y="216.6" width="12.5" height="11.7" fill="#2683C6" />
<text x="184.9" y="228.2" font-size="13" fill="#595959" text-anchor="start" font-weight="normal" >Blue Green</text>
<rect x="59" y="236.95" width="112" height="13.5" fill="#808080" />
<rect x="59.9" y="237.85" width="12.5" height="11.7" fill="#455F51" />
<rect x="73.78" y="237.85" width="12.5" height="11.7" fill="#E3DED1" />
<rect x="87.66" y="237.85" width="12.5" height="11.7" fill="#549E39" />
<rect x="101.53999999999999" y="237.85" width="12.5" height="11.7" fill="#8AB833" />
<rect x="115.42" y="237.85" width="12.5" height="11.7" fill="#C0CF3A" />
<rect x="129.3" y="237.85" width="12.5" height="11.7" fill="#029676" />
<rect x="143.18" y="237.85" width="12.5" height="11.7" fill="#4AB5C4" />
<rect x="157.06" y="237.85" width="12.5" height="11.7" fill="#0989B1" />
<text x="184.9" y="249.45" font-size="13" fill="#595959" text-anchor="start" font-weight="normal" >Green</text>
<rect x="59" y="258.2" width="112" height="13.5" fill="#808080" />
<rect x="59.9" y="259.09999999999997" width="12.5" height="11.7" fill="#455F51" />
<rect x="73.78" y="259.09999999999997" width="12.5" height="11.7" fill="#E3DED1" />
<rect x="87.66" y="259.09999999999997" width="12.5" height="11.7" fill="#99CB38" />
<rect x="101.53999999999999" y="259.09999999999997" width="12.5" height="11.7" fill="#63A537" />
<rect x="115.42" y="259.09999999999997" width="12.5" height="11.7" fill="#37A76F" />
<rect x="129.3" y="259.09999999999997" width="12.5" height="11.7" fill="#44C1A3" />
<rect x="143.18" y="259.09999999999997" width="12.5" height="11.7" fill="#4EB3CF" />
<rect x="157.06" y="259.09999999999997" width="12.5" height="11.7" fill="#51C3F9" />
<text x="184.9" y="270.7" font-size="13" fill="#595959" text-anchor="start" font-weight="normal" >Green Yellow</text>
<rect x="59" y="279.45" width="112" height="13.5" fill="#808080" />
<rect x="59.9" y="280.34999999999997" width="12.5" height="11.7" fill="#39302A" />
<rect x="73.78" y="280.34999999999997" width="12.5" height="11.7" fill="#E5DEDB" />
<rect x="87.66" y="280.34999999999997" width="12.5" height="11.7" fill="#FFCA08" />
<rect x="101.53999999999999" y="280.34999999999997" width="12.5" height="11.7" fill="#F8931D" />
<rect x="115.42" y="280.34999999999997" width="12.5" height="11.7" fill="#CE8D3E" />
<rect x="129.3" y="280.34999999999997" width="12.5" height="11.7" fill="#EC7016" />
<rect x="143.18" y="280.34999999999997" width="12.5" height="11.7" fill="#E64823" />
<rect x="157.06" y="280.34999999999997" width="12.5" height="11.7" fill="#9C6A6A" />
<text x="184.9" y="291.95" font-size="13" fill="#595959" text-anchor="start" font-weight="normal" >Yellow</text>
<rect x="59" y="300.7" width="112" height="13.5" fill="#808080" />
<rect x="59.9" y="301.59999999999997" width="12.5" height="11.7" fill="#4E3B30" />
<rect x="73.78" y="301.59999999999997" width="12.5" height="11.7" fill="#FBEEC9" />
<rect x="87.66" y="301.59999999999997" width="12.5" height="11.7" fill="#F0A22E" />
<rect x="101.53999999999999" y="301.59999999999997" width="12.5" height="11.7" fill="#A5644E" />
<rect x="115.42" y="301.59999999999997" width="12.5" height="11.7" fill="#B58B80" />
<rect x="129.3" y="301.59999999999997" width="12.5" height="11.7" fill="#C3986D" />
<rect x="143.18" y="301.59999999999997" width="12.5" height="11.7" fill="#A19574" />
<rect x="157.06" y="301.59999999999997" width="12.5" height="11.7" fill="#C17529" />
<text x="184.9" y="313.2" font-size="13" fill="#595959" text-anchor="start" font-weight="normal" >Yellow Orange</text>
<rect x="59" y="321.95" width="112" height="13.5" fill="#808080" />
<rect x="59.9" y="322.84999999999997" width="12.5" height="11.7" fill="#637052" />
<rect x="73.78" y="322.84999999999997" width="12.5" height="11.7" fill="#CCDDEA" />
<rect x="87.66" y="322.84999999999997" width="12.5" height="11.7" fill="#E48312" />
<rect x="101.53999999999999" y="322.84999999999997" width="12.5" height="11.7" fill="#BD582C" />
<rect x="115.42" y="322.84999999999997" width="12.5" height="11.7" fill="#865640" />
<rect x="129.3" y="322.84999999999997" width="12.5" height="11.7" fill="#9B8357" />
<rect x="143.18" y="322.84999999999997" width="12.5" height="11.7" fill="#C2BC80" />
<rect x="157.06" y="322.84999999999997" width="12.5" height="11.7" fill="#94A088" />
<text x="184.9" y="334.45" font-size="13" fill="#595959" text-anchor="start" font-weight="normal" >Orange</text>
<rect x="59" y="343.2" width="112" height="13.5" fill="#808080" />
<rect x="59.9" y="344.09999999999997" width="12.5" height="11.7" fill="#696464" />
<rect x="73.78" y="344.09999999999997" width="12.5" height="11.7" fill="#E9E5DC" />
<rect x="87.66" y="344.09999999999997" width="12.5" height="11.7" fill="#D34817" />
<rect x="101.53999999999999" y="344.09999999999997" width="12.5" height="11.7" fill="#9B2D1F" />
<rect x="115.42" y="344.09999999999997" width="12.5" height="11.7" fill="#A28E6A" />
<rect x="129.3" y="344.09999999999997" width="12.5" height="11.7" fill="#956251" />
<rect x="143.18" y="344.09999999999997" width="12.5" height="11.7" fill="#918485" />
<rect x="157.06" y="344.09999999999997" width="12.5" height="11.7" fill="#855D5D" />
<text x="184.9" y="355.7" font-size="13" fill="#595959" text-anchor="start" font-weight="normal" >Orange Red</text>
<rect x="59" y="364.45" width="112" height="13.5" fill="#808080" />
<rect x="59.9" y="365.34999999999997" width="12.5" height="11.7" fill="#505046" />
<rect x="73.78" y="365.34999999999997" width="12.5" height="11.7" fill="#EEECE1" />
<rect x="87.66" y="365.34999999999997" width="12.5" height="11.7" fill="#E84C22" />
<rect x="101.53999999999999" y="365.34999999999997" width="12.5" height="11.7" fill="#FFBD47" />
<rect x="115.42" y="365.34999999999997" width="12.5" height="11.7" fill="#B64926" />
<rect x="129.3" y="365.34999999999997" width="12.5" height="11.7" fill="#FF8427" />
<rect x="143.18" y="365.34999999999997" width="12.5" height="11.7" fill="#CC9900" />
<rect x="157.06" y="365.34999999999997" width="12.5" height="11.7" fill="#B22600" />
<text x="184.9" y="376.95" font-size="13" fill="#595959" text-anchor="start" font-weight="normal" >Red Orange</text>
<rect x="59" y="385.7" width="112" height="13.5" fill="#808080" />
<rect x="59.9" y="386.59999999999997" width="12.5" height="11.7" fill="#323232" />
<rect x="73.78" y="386.59999999999997" width="12.5" height="11.7" fill="#E5C243" />
<rect x="87.66" y="386.59999999999997" width="12.5" height="11.7" fill="#A5300F" />
<rect x="101.53999999999999" y="386.59999999999997" width="12.5" height="11.7" fill="#D55816" />
<rect x="115.42" y="386.59999999999997" width="12.5" height="11.7" fill="#E19825" />
<rect x="129.3" y="386.59999999999997" width="12.5" height="11.7" fill="#B19C7D" />
<rect x="143.18" y="386.59999999999997" width="12.5" height="11.7" fill="#7F5F52" />
<rect x="157.06" y="386.59999999999997" width="12.5" height="11.7" fill="#B27D49" />
<text x="184.9" y="398.2" font-size="13" fill="#595959" text-anchor="start" font-weight="normal" >Red</text>
<rect x="59" y="406.95" width="112" height="13.5" fill="#808080" />
<rect x="59.9" y="407.84999999999997" width="12.5" height="11.7" fill="#454551" />
<rect x="73.78" y="407.84999999999997" width="12.5" height="11.7" fill="#D8D9DC" />
<rect x="87.66" y="407.84999999999997" width="12.5" height="11.7" fill="#E32D91" />
<rect x="101.53999999999999" y="407.84999999999997" width="12.5" height="11.7" fill="#C830CC" />
<rect x="115.42" y="407.84999999999997" width="12.5" height="11.7" fill="#4EA6DC" />
<rect x="129.3" y="407.84999999999997" width="12.5" height="11.7" fill="#4775E7" />
<rect x="143.18" y="407.84999999999997" width="12.5" height="11.7" fill="#8971E1" />
<rect x="157.06" y="407.84999999999997" width="12.5" height="11.7" fill="#D54773" />
<text x="184.9" y="419.45" font-size="13" fill="#595959" text-anchor="start" font-weight="normal" >Red Violet</text>
<rect x="59" y="428.2" width="112" height="13.5" fill="#808080" />
<rect x="59.9" y="429.09999999999997" width="12.5" height="11.7" fill="#373545" />
<rect x="73.78" y="429.09999999999997" width="12.5" height="11.7" fill="#DCD8DC" />
<rect x="87.66" y="429.09999999999997" width="12.5" height="11.7" fill="#AD84C6" />
<rect x="101.53999999999999" y="429.09999999999997" width="12.5" height="11.7" fill="#8784C7" />
<rect x="115.42" y="429.09999999999997" width="12.5" height="11.7" fill="#5D739A" />
<rect x="129.3" y="429.09999999999997" width="12.5" height="11.7" fill="#6997AF" />
<rect x="143.18" y="429.09999999999997" width="12.5" height="11.7" fill="#84ACB6" />
<rect x="157.06" y="429.09999999999997" width="12.5" height="11.7" fill="#6F8183" />
<text x="184.9" y="440.7" font-size="13" fill="#595959" text-anchor="start" font-weight="normal" >Violet</text>
<rect x="59" y="449.45" width="112" height="13.5" fill="#808080" />
<rect x="59.9" y="450.34999999999997" width="12.5" height="11.7" fill="#632E62" />
<rect x="73.78" y="450.34999999999997" width="12.5" height="11.7" fill="#EAE5EB" />
<rect x="87.66" y="450.34999999999997" width="12.5" height="11.7" fill="#92278F" />
<rect x="101.53999999999999" y="450.34999999999997" width="12.5" height="11.7" fill="#9B57D3" />
<rect x="115.42" y="450.34999999999997" width="12.5" height="11.7" fill="#755DD9" />
<rect x="129.3" y="450.34999999999997" width="12.5" height="11.7" fill="#665EB8" />
<rect x="143.18" y="450.34999999999997" width="12.5" height="11.7" fill="#45A5ED" />
<rect x="157.06" y="450.34999999999997" width="12.5" height="11.7" fill="#5982DB" />
<text x="184.9" y="461.95" font-size="13" fill="#595959" text-anchor="start" font-weight="normal" >Violet II</text>
<rect x="59" y="470.7" width="112" height="13.5" fill="#808080" />
<rect x="59.9" y="471.59999999999997" width="12.5" height="11.7" fill="#775F55" />
<rect x="73.78" y="471.59999999999997" width="12.5" height="11.7" fill="#EBDDC3" />
<rect x="87.66" y="471.59999999999997" width="12.5" height="11.7" fill="#94B6D2" />
<rect x="101.53999999999999" y="471.59999999999997" width="12.5" height="11.7" fill="#DD8047" />
<rect x="115.42" y="471.59999999999997" width="12.5" height="11.7" fill="#A5AB81" />
<rect x="129.3" y="471.59999999999997" width="12.5" height="11.7" fill="#D8B25C" />
<rect x="143.18" y="471.59999999999997" width="12.5" height="11.7" fill="#7BA79D" />
<rect x="157.06" y="471.59999999999997" width="12.5" height="11.7" fill="#968C8C" />
<text x="184.9" y="483.2" font-size="13" fill="#595959" text-anchor="start" font-weight="normal" >Median</text>
<rect x="59" y="491.95" width="112" height="13.5" fill="#808080" />
<rect x="59.9" y="492.84999999999997" width="12.5" height="11.7" fill="#444D26" />
<rect x="73.78" y="492.84999999999997" width="12.5" height="11.7" fill="#FEFAC9" />
<rect x="87.66" y="492.84999999999997" width="12.5" height="11.7" fill="#A5B592" />
<rect x="101.53999999999999" y="492.84999999999997" width="12.5" height="11.7" fill="#F3A447" />
<rect x="115.42" y="492.84999999999997" width="12.5" height="11.7" fill="#E7BC29" />
<rect x="129.3" y="492.84999999999997" width="12.5" height="11.7" fill="#D092A7" />
<rect x="143.18" y="492.84999999999997" width="12.5" height="11.7" fill="#9C85C0" />
<rect x="157.06" y="492.84999999999997" width="12.5" height="11.7" fill="#809EC2" />
<text x="184.9" y="504.45" font-size="13" fill="#595959" text-anchor="start" font-weight="normal" >Paper</text>
<rect x="59" y="513.2" width="112" height="13.5" fill="#808080" />
<rect x="59.9" y="514.1" width="12.5" height="11.7" fill="#5E5E5E" />
<rect x="73.78" y="514.1" width="12.5" height="11.7" fill="#DDDDDD" />
<rect x="87.66" y="514.1" width="12.5" height="11.7" fill="#418AB3" />
<rect x="101.53999999999999" y="514.1" width="12.5" height="11.7" fill="#A6B727" />
<rect x="115.42" y="514.1" width="12.5" height="11.7" fill="#F69200" />
<rect x="129.3" y="514.1" width="12.5" height="11.7" fill="#838383" />
<rect x="143.18" y="514.1" width="12.5" height="11.7" fill="#FEC306" />
<rect x="157.06" y="514.1" width="12.5" height="11.7" fill="#DF5327" />
<text x="184.9" y="525.7" font-size="13" fill="#595959" text-anchor="start" font-weight="normal" >Marquee</text>
</g>
<rect x="298.2" y="62.5" width="15.5" height="466.4" fill="#f0f0f0" />
<rect x="298.2" y="62.5" width="15.5" height="15.8" fill="#ffffff" stroke="#c6c6c6" stroke-width="1" />
<rect x="298.2" y="78.3" width="15.5" height="397" fill="#ffffff" stroke="#c6c6c6" stroke-width="1" />
<rect x="298.2" y="512.4" width="15.5" height="16.5" fill="#ffffff" stroke="#c6c6c6" stroke-width="1" />
<path d="M301.5,72.5 L310.5,72.5 L306,68 Z M301.5,518 L310.5,518 L306,522.5 Z" fill="#606060"/>
<line x1="54.5" y1="531.5" x2="316" y2="531.5" stroke="#e2e2e2" stroke-width="1.2" />
<rect x="55.5" y="532.9" width="259.5" height="25.7" fill="#c6c6c6" />
<text x="86.6" y="550.8" font-size="12.5" fill="#444" text-anchor="start" font-weight="normal"  textLength="108.3" lengthAdjust="spacingAndGlyphs">Customize Colors...</text>
<line x1="87" y1="552.6" x2="95.5" y2="552.6" stroke="#444" stroke-width="0.9" />
<rect x="176" y="561.6" width="2" height="2" fill="#b0b0b0" />
<rect x="183" y="561.6" width="2" height="2" fill="#b0b0b0" />
<rect x="190" y="561.6" width="2" height="2" fill="#b0b0b0" />
<path d="M259,-4 L266.7,-4 L266.7,28.3 L273,28.3 Q274.1,28.3 274.1,29.5 L274.1,33.3 Q274.1,34.5 273,34.5 L251.7,34.5 Q250.5,34.5 250.5,33.3 L250.5,29.5 Q250.5,28.3 251.7,28.3 L259,28.3 L259,4.4 L252.3,7.3 Q250.6,7.9 250.6,6.2 L250.6,3.8 Q250.7,2.6 252,2 L259,-1.5 Z" fill="#e9b7b7" stroke="#c0504d" stroke-width="2.2" stroke-linejoin="round"/>
<path d="M118.9,36.2 C119.5,32 124,27.9 131,27.9 C139,27.9 143.9,32.5 143.9,39.2 C143.9,43.5 142.5,46 139.5,49.2 L128.8,61.3 L143.4,61.3 Q144.9,61.3 144.9,62.8 L144.9,66.8 Q144.9,68.3 143.4,68.3 L119.8,68.3 Q118.3,68.3 118.3,66.8 L118.3,61.2 L131.7,46.2 C133.7,44 134.6,42.3 134.6,40.2 C134.6,37.4 133,35.8 130.8,35.8 C128,35.8 125.5,37.2 123.8,39.3 Q121,41.5 119.5,39.5 Q118.7,38.3 118.9,36.2 Z" fill="#e9b7b7" stroke="#c0504d" stroke-width="2.4" stroke-linejoin="round"/>
<path d="M183.3,526.4 C185,523.2 190,521.3 195.8,521.3 C203,521.3 207.6,525 207.6,531 C207.6,535 205,538.5 201.3,540.1 C206,541.7 209.1,545.5 209.1,550.6 C209.1,558 203,562.4 193.5,562.4 C188.5,562.4 184.5,561 182.1,556.6 Q181.6,553.5 183.5,552.6 Q185,552 188.7,553.8 C190.5,554.4 192.3,554.6 194.2,554.6 C197.8,554.6 199.7,552.8 199.7,549.9 C199.7,546.5 197.3,544 193,544 L186.4,544 L186.4,537.9 L193.2,537.9 C196.6,537.9 198.3,535.6 198.3,533 C198.3,530 196.4,528 192.8,528 C190.6,528 188.6,528.5 186.5,530.2 Q184.2,531.5 183,529.7 Q182.5,528 183.3,526.4 Z" fill="#e9b7b7" stroke="#c0504d" stroke-width="2.4" stroke-linejoin="round"/>
</svg></body></html>
